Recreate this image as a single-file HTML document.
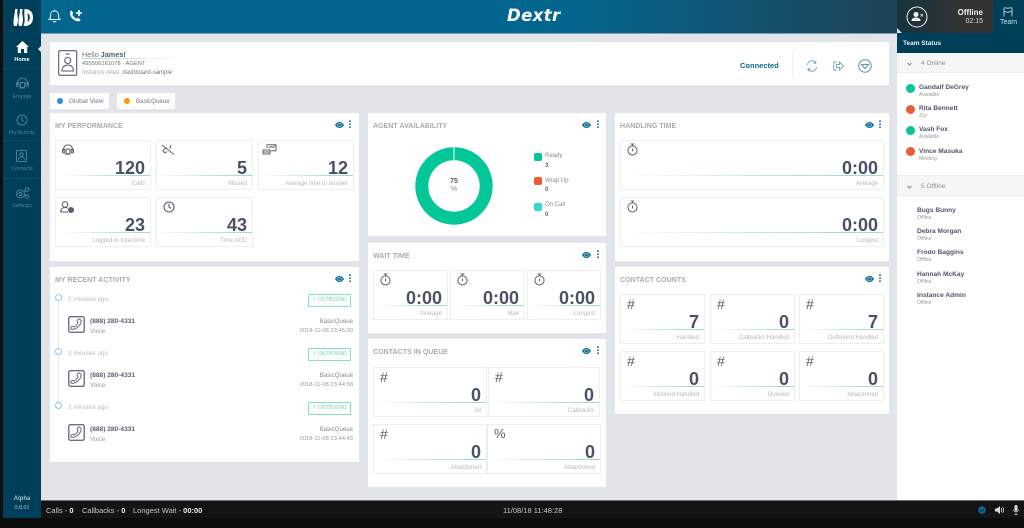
<!DOCTYPE html>
<html lang="en"><head><meta charset="utf-8"><title>Dextr</title>
<style>
html,body{margin:0;padding:0;width:1024px;height:528px;overflow:hidden;background:#e1e4e9;font-family:"Liberation Sans",sans-serif}
body{filter:blur(.3px)}
div,span,svg{position:absolute;white-space:nowrap}
b span,i{position:static}
.p{background:#fff}
.h{font:bold 7px/10px "Liberation Sans",sans-serif;color:#aaa;left:5px;top:8.5px;letter-spacing:.05px}
.e{top:9px;width:9px;height:6px}
.d{top:7px;width:2px;height:9px;background:radial-gradient(circle at 1px 1.2px,#2a7ea3 .9px,transparent 1px) 0 0/2px 3px}
.t{background:#fff;border:1px solid #eceef0;box-sizing:border-box;height:50px}
.n{right:5px;top:18px;font:bold 18px/18px "Liberation Sans",sans-serif;color:#4a5268}
.l{left:0;right:0;top:33.5px;height:1.5px;background:linear-gradient(90deg,rgba(164,219,200,0),#a4dbc8 85%)}
.c{right:5px;top:38px;font:6px/10px "Liberation Sans",sans-serif;color:#b9b9b9}
.g{left:6px;top:1.5px;font:14px/14px "Liberation Sans",sans-serif;color:#555d70}
.i{left:6px;top:3px}
.nv{left:3px;width:38px;text-align:center;font:5.5px/8px "Liberation Sans",sans-serif;color:#4f7f93}
.nm{font:bold 6.6px/9px "Liberation Sans",sans-serif;color:#4f566a}
.sb{font:5px/7px "Liberation Sans",sans-serif;color:#999}
.dot{width:9px;height:9px;border-radius:50%;left:906px}
.ago{left:68px;font:6.4px/9px "Liberation Sans",sans-serif;color:#bdbdbd;margin-top:.5px}
.bd{left:308px;width:43px;height:13px;box-sizing:border-box;border:1px solid #82e2b8;border-radius:1px;font:5px/11px "Liberation Sans",sans-serif;color:#6fd6a5;text-align:center}
.ph{left:90px;font:bold 6.6px/9px "Liberation Sans",sans-serif;color:#5b6172}
.vo{left:90px;font:6.2px/9px "Liberation Sans",sans-serif;color:#999}
.r1{right:671px;font:6.1px/9px "Liberation Sans",sans-serif;color:#888}
.r2{right:671px;font:5.8px/9px "Liberation Sans",sans-serif;color:#999}
.bt{top:505px;font:7.5px/11px "Liberation Sans",sans-serif;color:#c9c9c9}
.bt b{color:#eee}
.lg{left:545px;font:6px/9px "Liberation Sans",sans-serif;color:#8b8b8b}
.lv{left:545px;font:bold 6px/9px "Liberation Sans",sans-serif;color:#667}
.sw{left:534px;width:8px;height:8px;border-radius:2px}
</style></head><body>
<svg width="0" height="0" style="left:0;top:0"><defs>
<symbol id="eye" viewBox="0 0 18 12"><path d="M0 6C3 1 6 0 9 0s6 1 9 6c-3 5-6 6-9 6S3 11 0 6z" fill="#136f96"/><circle cx="9" cy="6" r="3.5" fill="none" stroke="#cfe3ec" stroke-width="1.2"/></symbol>
<symbol id="sw" viewBox="0 0 12 14"><g fill="none" stroke="#5a6172" stroke-width="1.1"><circle cx="6" cy="8" r="5"/><path d="M6 3V1M4 1h4M6 6v3"/></g></symbol>
<symbol id="cp" viewBox="0 0 16 16"><rect x=".7" y=".7" width="14.6" height="14.6" rx="1.5" fill="none" stroke="#6b7183" stroke-width="1.3"/><path d="M11 3c2 1 1.800 3 0 5.500S6.500 12.500 4 12.500c-1.500 0-1.800-1.500-.8-2.300s2-.8 2.500.2c1.500-.5 3.300-2.800 3.700-4.400-1-.5-1-1.800-.2-2.600.6-.6 1.200-.6 1.800-.4z" fill="none" stroke="#6b7183" stroke-width="1"/></symbol>
</defs></svg>

<!-- frame -->
<div style="left:0;top:0;width:3px;height:528px;background:#0d0d0d"></div>
<div style="left:3px;top:0;width:38px;height:518px;background:#003f5a"></div>
<div style="left:41px;top:0;width:856px;height:34px;box-sizing:border-box;background:linear-gradient(90deg,#03668f 0,#03668f 62%,#1f4356 100%);border-bottom:1px solid #7f9fb0"></div>
<div style="left:38px;top:46px;width:0;height:0;border:3.500px solid transparent;border-left:0;border-right:3.500px solid #e8eaee"></div>

<!-- logo -->
<svg style="left:13px;top:9px" width="20" height="17" viewBox="0 0 20 17"><path d="M2 0h2.800C3.800 3 4.300 5 4.800 8s0 6-1 9H1C0 14 .5 11 1 8s1-5 1-8zM7 0h2.800c-1 3-.5 5 0 8s0 6-1 9H6c-1-3-.5-6 0-9s1-5 1-8z" fill="#fff"/><path d="M11.500 0C17 0 20 3 20 8.500S17 17 11.500 17h-1c1-3 1.400-5 1-8.500-.3-3-.2-5.500 0-8.500z" fill="#fff"/><path d="M14.500 4c1.500.7 2.300 2.300 2.300 4.500S16 12.300 14.500 13c.5-3 .5-6 0-9z" fill="#003f5a"/></svg>
<!-- bell/phone -->
<svg style="left:48px;top:9px" width="13" height="14" viewBox="0 0 13 14" fill="none" stroke="#e8f2f6" stroke-width="1"><path d="M1 10.500c1.500-1 1.500-2.500 1.500-4.500 0-2.500 1.700-4 4-4s4 1.500 4 4c0 2 0 3.500 1.500 4.500z"/><path d="M5 12c.5 1.200 2.500 1.200 3 0M6.500 2V.8"/></svg>
<svg style="left:69px;top:9px" width="14" height="14" viewBox="0 0 14 14"><path d="M2.500 1.500l1.800 2.800-1 1.200c.8 2 2.200 3.400 4.200 4.200l1.200-1 2.800 1.800c-.4 1.500-1.500 2-2.800 1.800C4.700 11.800 1.500 8.500 1 4.500.8 3 1.200 2 2.500 1.500z" fill="#fff"/><path d="M10 1v6M7 4h6" stroke="#fff" stroke-width="1.600"/></svg>
<div style="left:507px;top:6px;font:italic bold 16.500px/20px 'DejaVu Sans',sans-serif;color:#fff;letter-spacing:.4px">Dextr</div>

<!-- nav -->
<svg style="left:16px;top:41px" width="13" height="12" viewBox="0 0 13 12"><path d="M6.500 0L13 6h-1.800v6H8V8H5v4H1.800V6H0z" fill="#fff"/></svg>
<div class="nv" style="top:56px;color:#fff;font-weight:bold">Home</div>
<div style="left:3px;top:68px;width:38px;height:1px;background:#0b4e6a"></div>
<svg style="left:16px;top:77px" width="13" height="13" viewBox="0 0 13 13" fill="none" stroke="#4f7f93" stroke-width="1"><path d="M1.500 8V6a5 5 0 0 1 10 0v2"/><rect x=".5" y="5.500" width="2.500" height="4" rx="1"/><rect x="10" y="5.500" width="2.500" height="4" rx="1"/><rect x="4.500" y="5.500" width="4" height="5"/><path d="M3 11h6"/></svg>
<div class="nv" style="top:93px">Engage</div>
<svg style="left:16px;top:114px" width="12" height="12" viewBox="0 0 12 12" fill="none" stroke="#4f7f93" stroke-width="1"><circle cx="6" cy="6" r="5"/><path d="M6 2.500V6l2 1.500"/></svg>
<div class="nv" style="top:129px">My Activity</div>
<div style="left:3px;top:140px;width:38px;height:1px;background:#0b4e6a"></div>
<svg style="left:16px;top:150px" width="12" height="12" viewBox="0 0 12 12" fill="none" stroke="#4f7f93" stroke-width="1"><rect x=".5" y=".5" width="10" height="11" rx="1"/><circle cx="5.500" cy="4.500" r="1.800"/><path d="M2.500 10c0-2 1.500-3 3-3s3 1 3 3"/></svg>
<div class="nv" style="top:165px">Contacts</div>
<div style="left:3px;top:178px;width:38px;height:1px;background:#0b4e6a"></div>
<svg style="left:15px;top:187px" width="15" height="13" viewBox="0 0 15 13" fill="none" stroke="#4f7f93" stroke-width="1"><circle cx="5.500" cy="7" r="4"/><circle cx="5.500" cy="7" r="1.500"/><circle cx="12" cy="2.500" r="1.800"/><circle cx="12" cy="9.500" r="1.800"/><path d="M9 5l1.500-1.500M9.500 8h1"/></svg>
<div class="nv" style="top:202px">Settings</div>
<div class="nv" style="top:495px;color:#a8c0cb;font:bold 6px/9px 'Liberation Sans',sans-serif">Alpha</div>
<div class="nv" style="top:504px;color:#a8c0cb;font:6px/9px 'Liberation Serif',serif">0.8.01</div>

<!-- greeting -->
<div class="p" style="left:50px;top:42px;width:839px;height:43px"></div>
<svg style="left:58px;top:50px" width="20" height="26" viewBox="0 0 20 26" fill="none" stroke="#565d72" stroke-width="1.100"><rect x=".7" y=".7" width="18" height="24.600" rx="1.500"/><path d="M7.500 4h4"/><circle cx="9.700" cy="10.500" r="3"/><path d="M4 21c0-4 2.500-6 5.700-6s5.700 2 5.700 6z"/></svg>
<div style="left:82px;top:50px;font:7.3px/10px 'Liberation Sans',sans-serif;color:#777">Hello <b style="color:#555c6e">James!</b></div>
<div style="left:82px;top:58px;width:105px;height:1px;background:linear-gradient(90deg,#a8dcca,rgba(168,220,202,0))"></div>
<div style="left:82px;top:60px;font:5.8px/9px 'Liberation Sans',sans-serif;color:#777">495506161078 · AGENT</div>
<div style="left:82px;top:69px;font:6px/9px 'Liberation Sans',sans-serif;color:#aaa">Instance Alias: <span style="position:static;color:#777">dashboard-sample</span></div>
<div style="left:740px;top:61px;font:bold 7.500px/10px 'Liberation Sans',sans-serif;color:#11698f">Connected</div>
<div style="left:792px;top:50px;width:1px;height:28px;background:#eef0f2"></div>
<svg style="left:806px;top:60px" width="12" height="12" viewBox="0 0 12 12" fill="none" stroke="#7ba9bf" stroke-width="1"><path d="M1.500 5A4.500 4.500 0 0 1 9.500 2.500M10.500 7A4.500 4.500 0 0 1 2.500 9.500M9.800 .8v2.500H7.300M2.200 11.200V8.700h2.500"/></svg>
<svg style="left:833px;top:61px" width="11" height="10" viewBox="0 0 11 10" fill="none" stroke="#7ba9bf" stroke-width="1"><path d="M4 1H.7v8H4M3.500 3.500h3V1l4 4-4 4V6.500h-3z"/></svg>
<svg style="left:858px;top:59px" width="14" height="14" viewBox="0 0 14 14" fill="none" stroke="#5e93ad" stroke-width="1"><circle cx="7" cy="7" r="6.200"/><path d="M3.500 5.500h7L7 9.500z"/></svg>

<!-- tabs -->
<div class="p" style="left:50px;top:93px;width:59px;height:16px"></div>
<div style="left:57px;top:98px;width:6px;height:6px;border-radius:50%;background:#2a8cf0"></div>
<div style="left:69px;top:97px;font:6.500px/9px 'Liberation Sans',sans-serif;color:#777">Global View</div>
<div class="p" style="left:117px;top:93px;width:58px;height:16px"></div>
<div style="left:124px;top:98px;width:6px;height:6px;border-radius:50%;background:#ff9800"></div>
<div style="left:136px;top:97px;font:6.2px/9px 'Liberation Sans',sans-serif;color:#777">BasicQueue</div>

<!-- MY PERFORMANCE -->
<div class="p" style="left:50px;top:113px;width:309px;height:148px">
<div class="h">MY PERFORMANCE</div>
<svg class="e" style="left:285px"><use href="#eye"/></svg><div class="d" style="left:299px"></div>
<div class="t" style="left:5px;top:27px;width:96px"><svg class="i" width="12" height="12" viewBox="0 0 13 13" fill="none" stroke="#5a6172" stroke-width="1.100"><path d="M1.500 8V6a5 5 0 0 1 10 0v2"/><rect x=".5" y="5.500" width="2.500" height="4" rx="1"/><rect x="10" y="5.500" width="2.500" height="4" rx="1"/><rect x="4.500" y="5.500" width="4" height="5"/><path d="M3 11h6"/></svg><div class="n">120</div><div class="l"></div><div class="c">Calls</div></div>
<div class="t" style="left:106px;top:27px;width:97px"><svg class="i" style="left:4px" width="14" height="11" viewBox="0 0 14 11" fill="none" stroke="#5a6172" stroke-width="1"><path d="M1 1l12 9.500M2 7c1-2 3-3 4-3M10 1c-1 2-1 3-1 4M2 7l2 2 2-1.500"/></svg><div class="n">5</div><div class="l"></div><div class="c">Missed</div></div>
<div class="t" style="left:208px;top:27px;width:96px"><svg class="i" style="left:3px" width="15" height="11" viewBox="0 0 15 11" fill="none" stroke="#5a6172" stroke-width="1"><path d="M5 4V.7h9v6H9M7 4l2-1.500 2 1 2-2M1 6h7v4H1zM1 8h7"/></svg><div class="n">12</div><div class="l"></div><div class="c">Average time to answer</div></div>
<div class="t" style="left:5px;top:84px;width:96px"><svg class="i" style="left:4px" width="14" height="12" viewBox="0 0 14 12" fill="none" stroke="#5a6172" stroke-width="1.100"><circle cx="5" cy="3.500" r="2.800"/><path d="M.7 11c0-3 2-4.500 4.300-4.500 1 0 2 .3 2.500.8M.7 11H8"/><circle cx="11" cy="9" r="2.500" fill="#5a6172"/></svg><div class="n">23</div><div class="l"></div><div class="c">Logged-in total time</div></div>
<div class="t" style="left:106px;top:84px;width:97px"><svg class="i" width="12" height="12" viewBox="0 0 12 12" fill="none" stroke="#5a6172" stroke-width="1.100"><circle cx="6" cy="6" r="5"/><path d="M6 2.500V6l2 1.500"/></svg><div class="n">43</div><div class="l"></div><div class="c">Time ACD</div></div>
</div>

<!-- RECENT ACTIVITY -->
<div class="p" style="left:50px;top:267px;width:309px;height:195px">
<div class="h">MY RECENT ACTIVITY</div>
<svg class="e" style="left:285px"><use href="#eye"/></svg><div class="d" style="left:299px"></div>
</div>
<div style="left:58px;top:301px;width:1px;height:105px;background:#e6eef5"></div>
<div style="left:55px;top:294px;width:7px;height:7px;box-sizing:border-box;border:1px solid #8fc4f5;border-radius:50%;background:#fff"></div>
<div style="left:55px;top:348px;width:7px;height:7px;box-sizing:border-box;border:1px solid #8fc4f5;border-radius:50%;background:#fff"></div>
<div style="left:55px;top:402px;width:7px;height:7px;box-sizing:border-box;border:1px solid #8fc4f5;border-radius:50%;background:#fff"></div>
<div class="ago" style="top:294px">2 minutes ago</div><div class="bd" style="top:294px">⇡ OUTBOUND</div>
<svg style="left:68px;top:316px" width="17" height="17"><use href="#cp"/></svg>
<div class="ph" style="top:317px">(888) 280-4331</div><div class="vo" style="top:327px">Voice</div>
<div class="r1" style="top:317px">BasicQueue</div><div class="r2" style="top:327px">2018-11-08 23:45:30</div>
<div class="ago" style="top:348px">3 minutes ago</div><div class="bd" style="top:348px">⇡ OUTBOUND</div>
<svg style="left:68px;top:370px" width="17" height="17"><use href="#cp"/></svg>
<div class="ph" style="top:371px">(888) 280-4331</div><div class="vo" style="top:381px">Voice</div>
<div class="r1" style="top:371px">BasicQueue</div><div class="r2" style="top:381px">2018-11-08 23:44:58</div>
<div class="ago" style="top:402px">3 minutes ago</div><div class="bd" style="top:402px">⇡ OUTBOUND</div>
<svg style="left:68px;top:424px" width="17" height="17"><use href="#cp"/></svg>
<div class="ph" style="top:425px">(888) 280-4331</div><div class="vo" style="top:435px">Voice</div>
<div class="r1" style="top:425px">BasicQueue</div><div class="r2" style="top:435px">2018-11-08 23:44:43</div>

<!-- AGENT AVAILABILITY -->
<div class="p" style="left:368px;top:113px;width:238px;height:123px">
<div class="h">AGENT AVAILABILITY</div>
<svg class="e" style="left:214px"><use href="#eye"/></svg><div class="d" style="left:229px"></div>
</div>
<svg style="left:414px;top:145.500px" width="80" height="80" viewBox="0 0 80 80"><circle cx="40" cy="40" r="32.200" fill="none" stroke="#03c699" stroke-width="13"/><path d="M40 0v15" stroke="#fff" stroke-width="1"/></svg>
<div style="left:444px;top:177px;width:20px;text-align:center;font:bold 7px/9px 'Liberation Sans',sans-serif;color:#555c6e">75</div>
<div style="left:444px;top:185px;width:20px;text-align:center;font:7px/9px 'Liberation Sans',sans-serif;color:#888">%</div>
<div class="sw" style="top:153px;background:#03c699"></div><div class="lg" style="top:152px">Ready</div><div class="lv" style="top:162px">3</div>
<div class="sw" style="top:177px;background:#ee5c35"></div><div class="lg" style="top:177px">Wrap Up</div><div class="lv" style="top:186px">0</div>
<div class="sw" style="top:203px;background:#35d6d6"></div><div class="lg" style="top:201px">On Call</div><div class="lv" style="top:211px">0</div>

<!-- WAIT TIME -->
<div class="p" style="left:368px;top:243px;width:238px;height:90px">
<div class="h">WAIT TIME</div>
<svg class="e" style="left:214px"><use href="#eye"/></svg><div class="d" style="left:229px"></div>
<div class="t" style="left:5px;top:27px;width:75px"><svg class="i" width="11" height="13" style="top:2px"><use href="#sw"/></svg><div class="n">0:00</div><div class="l"></div><div class="c">Average</div></div>
<div class="t" style="left:82px;top:27px;width:75px"><svg class="i" width="11" height="13" style="top:2px"><use href="#sw"/></svg><div class="n">0:00</div><div class="l"></div><div class="c">Max</div></div>
<div class="t" style="left:159px;top:27px;width:74px"><svg class="i" width="11" height="13" style="top:2px"><use href="#sw"/></svg><div class="n">0:00</div><div class="l"></div><div class="c">Longest</div></div>
</div>

<!-- CONTACTS IN QUEUE -->
<div class="p" style="left:368px;top:339px;width:238px;height:148px">
<div class="h">CONTACTS IN QUEUE</div>
<svg class="e" style="left:214px"><use href="#eye"/></svg><div class="d" style="left:229px"></div>
<div class="t" style="left:5px;top:28px;width:114px"><div class="g">#</div><div class="n">0</div><div class="l"></div><div class="c">All</div></div>
<div class="t" style="left:120px;top:28px;width:112px"><div class="g">#</div><div class="n">0</div><div class="l"></div><div class="c">Callbacks</div></div>
<div class="t" style="left:5px;top:85px;width:114px"><div class="g">#</div><div class="n">0</div><div class="l"></div><div class="c">Abandoned</div></div>
<div class="t" style="left:119px;top:85px;width:114px"><div class="g" style="font-size:13px">%</div><div class="n">0</div><div class="l"></div><div class="c">Abandoned</div></div>
</div>

<!-- HANDLING TIME -->
<div class="p" style="left:615px;top:113px;width:274px;height:148px">
<div class="h">HANDLING TIME</div>
<svg class="e" style="left:250px"><use href="#eye"/></svg><div class="d" style="left:264px"></div>
<div class="t" style="left:5px;top:27px;width:264px"><svg class="i" width="11" height="13" style="top:2px"><use href="#sw"/></svg><div class="n">0:00</div><div class="l"></div><div class="c">Average</div></div>
<div class="t" style="left:5px;top:84px;width:264px"><svg class="i" width="11" height="13" style="top:2px"><use href="#sw"/></svg><div class="n">0:00</div><div class="l"></div><div class="c">Longest</div></div>
</div>

<!-- CONTACT COUNTS -->
<div class="p" style="left:615px;top:267px;width:274px;height:147px">
<div class="h">CONTACT COUNTS</div>
<svg class="e" style="left:250px"><use href="#eye"/></svg><div class="d" style="left:264px"></div>
<div class="t" style="left:5px;top:27px;width:85px"><div class="g">#</div><div class="n">7</div><div class="l"></div><div class="c">Handled</div></div>
<div class="t" style="left:95px;top:27px;width:85px"><div class="g">#</div><div class="n">0</div><div class="l"></div><div class="c">Callbacks Handled</div></div>
<div class="t" style="left:184px;top:27px;width:85px"><div class="g">#</div><div class="n">7</div><div class="l"></div><div class="c">Outbound Handled</div></div>
<div class="t" style="left:5px;top:84px;width:85px"><div class="g">#</div><div class="n">0</div><div class="l"></div><div class="c">Inbound Handled</div></div>
<div class="t" style="left:95px;top:84px;width:85px"><div class="g">#</div><div class="n">0</div><div class="l"></div><div class="c">Queued</div></div>
<div class="t" style="left:184px;top:84px;width:85px"><div class="g">#</div><div class="n">0</div><div class="l"></div><div class="c">Abandoned</div></div>
</div>

<!-- right panel -->
<div class="p" style="left:897px;top:33px;width:127px;height:467px"></div>
<div style="left:897px;top:0;width:96px;height:33px;background:linear-gradient(90deg,#16333f,#333 70%)"></div>
<div style="left:993px;top:0;width:31px;height:33px;background:#003f5a"></div>
<div style="left:897px;top:33px;width:127px;height:20px;background:#003f5a"></div>
<div style="left:897px;top:28px;width:0;height:0;border-left:5px solid #e1e4e9;border-top:5px solid transparent"></div>
<svg style="left:906px;top:6px" width="22" height="22" viewBox="0 0 22 22" fill="none"><circle cx="11" cy="11" r="10" stroke="#f2f2f2" stroke-width="1"/><circle cx="10" cy="8.500" r="2.500" fill="#f2f2f2"/><path d="M5.500 15c0-2.500 2-3.500 4.500-3.500s4.500 1 4.500 3.500z" fill="#f2f2f2"/><path d="M14.500 8l2.500 2.500M17 8l-2.500 2.500" stroke="#f2f2f2" stroke-width=".8"/></svg>
<div style="right:41px;top:8px;font:bold 8px/10px 'Liberation Sans',sans-serif;color:#f0f0f0">Offline</div>
<div style="right:41px;top:17px;font:7px/9px 'Liberation Sans',sans-serif;color:#ddd">02:15</div>
<svg style="left:1003px;top:7px" width="10" height="10" viewBox="0 0 10 10" fill="none" stroke="#dfe8ec" stroke-width=".8"><path d="M1 9.500V1c2-1 3 1 5 0M9 9.500V1c-1-.5-2 0-3 0M1 5c2-1 3 1 5 0s2 0 3 0"/></svg>
<div style="left:993px;width:31px;top:18px;text-align:center;font:7px/9px 'Liberation Sans',sans-serif;color:#cfdde3">Team</div>
<div style="left:903px;top:39px;font:bold 6.500px/9px 'Liberation Sans',sans-serif;color:#e6eef2">Team Status</div>

<div style="left:897px;top:53px;width:127px;height:20px;background:#f6f6f6;border-bottom:1px solid #eee;box-sizing:border-box"></div>
<svg style="left:907px;top:62px" width="5" height="4" fill="none" stroke="#888"><path d="M.5 1l2 2 2-2"/></svg>
<div style="left:921px;top:59px;font:6.6px/9px 'Liberation Sans',sans-serif;color:#8f8f8f">4 Online</div>
<div class="dot" style="top:83.500px;background:#03c699"></div><div class="nm" style="left:919px;top:83px">Gandalf DeGrey</div><div class="sb" style="left:919px;top:92px">Available</div>
<div class="dot" style="top:104.500px;background:#ee5c35"></div><div class="nm" style="left:919px;top:104px">Rita Bennett</div><div class="sb" style="left:919px;top:113px">Zzz</div>
<div class="dot" style="top:126px;background:#03c699"></div><div class="nm" style="left:919px;top:125px">Vash Fox</div><div class="sb" style="left:919px;top:134px">Available</div>
<div class="dot" style="top:147px;background:#ee5c35"></div><div class="nm" style="left:919px;top:147px">Vince Masuka</div><div class="sb" style="left:919px;top:156px">Meeting</div>

<div style="left:897px;top:175px;width:127px;height:21px;background:#f6f6f6;border:solid #eee;border-width:1px 0;box-sizing:border-box"></div>
<svg style="left:907px;top:185px" width="5" height="4" fill="none" stroke="#888"><path d="M.5 1l2 2 2-2"/></svg>
<div style="left:921px;top:182px;font:6.6px/9px 'Liberation Sans',sans-serif;color:#8f8f8f">5 Offline</div>
<div class="nm" style="left:917px;top:206px">Bugs Bunny</div><div class="sb" style="left:917px;top:215px">Offline</div>
<div class="nm" style="left:917px;top:227px">Debra Morgan</div><div class="sb" style="left:917px;top:236px">Offline</div>
<div class="nm" style="left:917px;top:248px">Frodo Baggins</div><div class="sb" style="left:917px;top:257px">Offline</div>
<div class="nm" style="left:917px;top:270px">Hannah McKay</div><div class="sb" style="left:917px;top:279px">Offline</div>
<div class="nm" style="left:917px;top:291px">Instance Admin</div><div class="sb" style="left:917px;top:300px">Offline</div>

<!-- bottom -->
<div style="left:41px;top:500px;width:983px;height:18px;background:#141414;border-top:1px solid #6e6e6e;box-sizing:border-box"></div>
<div style="left:0;top:518px;width:1024px;height:10px;background:#0c0c0c"></div>
<div class="bt" style="left:46px">Calls - <b>0</b></div>
<div class="bt" style="left:82px">Callbacks - <b>0</b></div>
<div class="bt" style="left:133px">Longest Wait - <b>00:00</b></div>
<div class="bt" style="left:503px">11/08/18 11:48:28</div>
<svg style="left:978px;top:506px" width="8" height="8" viewBox="0 0 8 8"><circle cx="4" cy="4" r="3.800" fill="#0a6d99"/><path d="M2 4l1.500 1.500L6 2.800" fill="none" stroke="#0d2530" stroke-width="1"/></svg>
<svg style="left:995px;top:506px" width="9" height="8" viewBox="0 0 9 8"><path d="M0 2.500h2L5 0v8L2 5.500H0z" fill="#ddd"/><path d="M6 2c1 1 1 3 0 4M7.500 1c1.500 1.500 1.500 4.500 0 6" fill="none" stroke="#ddd" stroke-width=".8"/></svg>
<svg style="left:1013px;top:505px" width="6" height="10" viewBox="0 0 6 10"><rect x="1.500" y="0" width="3" height="6" rx="1.500" fill="#ddd"/><path d="M.5 4.500c0 3 5 3 5 0M3 7.500V10M1.500 9.700h3" fill="none" stroke="#ddd" stroke-width=".7"/></svg>
</body></html>
